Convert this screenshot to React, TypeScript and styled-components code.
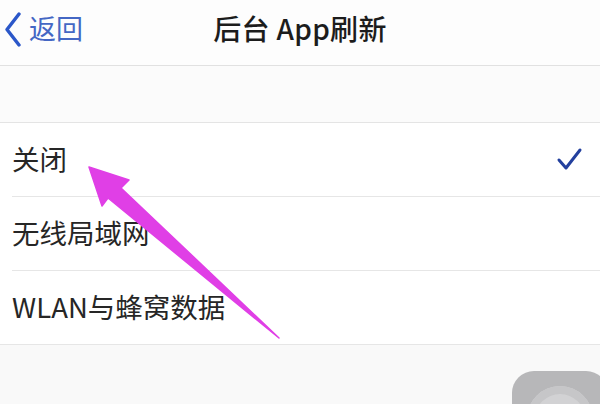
import styled, { createGlobalStyle } from "styled-components";

const GlobalStyle = createGlobalStyle`
  html, body {
    margin: 0;
    padding: 0;
    width: 600px;
    height: 404px;
    overflow: hidden;
    background: #f9f9f9;
  }
  * {
    box-sizing: border-box;
  }
`;

const options = ["关闭", "无线局域网", "WLAN与蜂窝数据"];

export default function App() {
  const selected = 0;
  return (
    <>
      <GlobalStyle />
      <Screen>
        <NavBar>
          <BackButton>
            <svg width="18" height="36" viewBox="0 0 18 36">
              <polyline
                points="15,3 3,18.5 15,34"
                fill="none"
                stroke="#2b57c9"
                strokeWidth="3.4"
                strokeLinecap="round"
                strokeLinejoin="round"
              />
            </svg>
            <BackLabel>返回</BackLabel>
          </BackButton>
          <Title>后台 App刷新</Title>
        </NavBar>

        <Spacer />

        <OptionList>
          {options.map((label, i) => (
            <OptionRow key={label} $last={i === options.length - 1}>
              <OptionLabel>{label}</OptionLabel>
              {i === selected && (
                <svg width="28" height="26" viewBox="0 0 28 26">
                  <polyline
                    points="3,13 10,21 24,3"
                    fill="none"
                    stroke="#23409e"
                    strokeWidth="3"
                    strokeLinecap="round"
                    strokeLinejoin="round"
                  />
                </svg>
              )}
            </OptionRow>
          ))}
        </OptionList>

        <Pointer width="600" height="404" viewBox="0 0 600 404">
          <path
            d="M89 167 L129 180 L121 188 L279 338 L108 198 L102 206 Z"
            fill="#e03fe6"
            stroke="#e03fe6"
            strokeWidth="1.5"
            strokeLinejoin="round"
          />
        </Pointer>

        <AssistiveTouch>
          <TouchRing />
        </AssistiveTouch>
      </Screen>
    </>
  );
}

const Screen = styled.div`
  position: relative;
  width: 600px;
  height: 404px;
  overflow: hidden;
  display: flex;
  flex-direction: column;
  background: #f9f9f9;
  font-family: "Noto Sans CJK SC", "Noto Sans", sans-serif;
`;

const NavBar = styled.header`
  position: relative;
  height: 66px;
  flex-shrink: 0;
  display: flex;
  align-items: center;
  justify-content: center;
  background: #fdfdfd;
  border-bottom: 1px solid #e1e1e1;
`;

const BackButton = styled.div`
  position: absolute;
  left: 4px;
  top: 10px;
  display: flex;
  align-items: center;
  gap: 7px;
`;

const BackLabel = styled.span`
  font-size: 27px;
  color: #4467c4;
  line-height: 36px;
  padding-bottom: 2px;
`;

const Title = styled.h1`
  margin: 0 0 9px;
  font-size: 28px;
  font-weight: 500;
  color: #1c1c1c;
  letter-spacing: 0.3px;
`;

const Spacer = styled.div`
  height: 57px;
  flex-shrink: 0;
  background: #fbfbfb;
  border-bottom: 1px solid #e4e4e4;
`;

const OptionList = styled.ul`
  margin: 0;
  padding: 0;
  list-style: none;
  background: #ffffff;
`;

const OptionRow = styled.li<{ $last: boolean }>`
  position: relative;
  height: 74px;
  display: flex;
  align-items: center;
  justify-content: space-between;
  padding: 0 16px 0 12px;

  &::after {
    content: "";
    position: absolute;
    left: ${(p) => (p.$last ? "0" : "12px")};
    right: 0;
    bottom: 0;
    height: 1px;
    background: #e6e6e6;
  }
`;

const OptionLabel = styled.span`
  font-size: 27.5px;
  color: #262626;
  padding-bottom: 4px;
`;

const Pointer = styled.svg`
  position: absolute;
  left: 0;
  top: 0;
  pointer-events: none;
`;

const AssistiveTouch = styled.div`
  position: absolute;
  left: 512px;
  top: 371px;
  width: 96px;
  height: 96px;
  border-radius: 22px;
  background: #b7b7b9;
  display: flex;
  align-items: center;
  justify-content: center;
`;

const TouchRing = styled.div`
  width: 66px;
  height: 66px;
  border-radius: 50%;
  background: #d2d2d4;
  box-shadow: inset 0 0 0 8px #c6c6c8;
`;
